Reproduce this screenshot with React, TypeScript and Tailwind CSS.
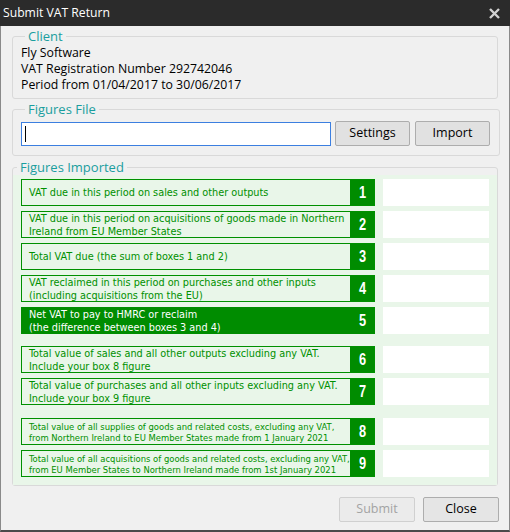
import React from 'react';

type Row = {
  num: string;
  lines: string[];
  small?: boolean;
  highlight?: boolean;
  gapBefore?: string;
};

const rows: Row[] = [
  { num: '1', lines: ['VAT due in this period on sales and other outputs'] },
  { num: '2', lines: ['VAT due in this period on acquisitions of goods made in Northern', 'Ireland from EU Member States'] },
  { num: '3', lines: ['Total VAT due (the sum of boxes 1 and 2)'] },
  { num: '4', lines: ['VAT reclaimed in this period on purchases and other inputs', '(including acquisitions from the EU)'] },
  { num: '5', lines: ['Net VAT to pay to HMRC or reclaim', '(the difference between boxes 3 and 4)'], highlight: true },
  { num: '6', lines: ['Total value of sales and all other outputs excluding any VAT.', 'Include your box 8 figure'], gapBefore: 'mt-[12px]' },
  { num: '7', lines: ['Total value of purchases and all other inputs excluding any VAT.', 'Include your box 9 figure'] },
  { num: '8', lines: ['Total value of all supplies of goods and related costs, excluding any VAT,', 'from Northern Ireland to EU Member States made from 1 January 2021'], small: true, gapBefore: 'mt-[13px]' },
  { num: '9', lines: ['Total value of all acquisitions of goods and related costs, excluding any VAT,', 'from EU Member States to Northern Ireland made from 1st January 2021'], small: true },
];

const FigureRow: React.FC<{ row: Row; first: boolean }> = ({ row, first }) => {
  const labelBox = row.highlight ? 'bg-[#008c00] text-white' : 'bg-[#e9f6e9] text-[#009000]';
  return (
    <div className={`flex h-[27px] ${first ? '' : row.gapBefore ?? 'mt-[5px]'}`}>
      <div className={`flex w-[354px] border ${row.highlight ? 'border-[#008c00]' : 'border-[#009000]'}`}>
        <div
          className={`flex-1 min-w-0 overflow-hidden flex flex-col justify-center pl-[7px] ${labelBox} ${
            row.small ? 'text-[9.4px] leading-[11px]' : 'text-[10.8px] leading-[13px]'
          }`}
        >
          {row.lines.map((l) => (
            <div key={l} className="whitespace-nowrap">{l}</div>
          ))}
        </div>
        <div className="flex-none w-[24px] bg-[#008c00] text-white flex items-center justify-center text-[16px] font-bold font-['Liberation_Sans',sans-serif]">
          <span className="inline-block scale-x-80">{row.num}</span>
        </div>
      </div>
      <div className="ml-[8px] w-[106px] bg-white" />
    </div>
  );
};

export default function App() {
  return (
    <div className="w-[510px] h-[532px] bg-[#f0f0f0] flex flex-col border-l border-r border-[#8a8a8a] border-b-2 border-b-[#4a4a4a] font-['Open_Sans','Noto_Sans',sans-serif] text-black">
      {/* title bar */}
      <div className="h-[26px] bg-[#2b2b2b] flex items-center justify-between pl-[3px] pr-[10px] -mx-px">
        <span className="text-white text-[12.2px]">Submit VAT Return</span>
        <svg width="11" height="11" viewBox="0 0 11 11">
          <path d="M1 1 L10 10 M10 1 L1 10" stroke="#d2d2d2" strokeWidth="2.4" />
        </svg>
      </div>

      <div className="flex flex-col px-[11px]">
        {/* Client */}
        <fieldset className="mt-[2px] border border-[#d9d9d9] rounded-[3px] pl-[8px] pt-[1px] pb-[5px]">
          <legend className="ml-[4px] px-[3px] text-[13px] leading-[16px] text-[#1a9e9e]">Client</legend>
          <div className="text-[12.3px] leading-[16px]">
            <div>Fly Software</div>
            <div>VAT Registration Number 292742046</div>
            <div>Period from 01/04/2017 to 30/06/2017</div>
          </div>
        </fieldset>

        {/* Figures File */}
        <fieldset className="mt-[2px] border border-[#d9d9d9] rounded-[3px] pl-[8px] pr-[9px] pt-[4px] pb-[9px]">
          <legend className="ml-[4px] px-[3px] text-[13px] leading-[16px] text-[#1a9e9e]">Figures File</legend>
          <div className="flex items-center">
            <div className="w-[310px] h-[24px] bg-white border border-[#3c7fe0] flex items-center pl-[3px]">
              <div className="w-px h-[16px] bg-black" />
            </div>
            <button className="ml-[4px] w-[75px] h-[25px] bg-[#e1e1e1] border border-[#adadad] rounded-[2px] text-[12.5px]">
              Settings
            </button>
            <button className="ml-[5px] w-[75px] h-[25px] bg-[#e1e1e1] border border-[#adadad] rounded-[2px] text-[12.5px]">
              Import
            </button>
          </div>
        </fieldset>

        {/* Figures Imported */}
        <fieldset className="mt-[3px] border border-[#d9d9d9] rounded-[3px] p-0">
          <legend className="ml-[4px] px-[3px] text-[13px] leading-[16px] text-[#1a9e9e]">Figures Imported</legend>
          <div className="bg-[#e9f6e9] pl-[8px] pr-[8px] pt-[4px] pb-[8px] font-['DejaVu_Sans_Condensed','DejaVu_Sans',sans-serif]">
            {rows.map((r, i) => (
              <FigureRow key={r.num} row={r} first={i === 0} />
            ))}
          </div>
        </fieldset>

        {/* footer */}
        <div className="flex justify-end gap-[8px] mt-[11px] -mr-px">
          <button disabled className="w-[76px] h-[25px] bg-[#ebebeb] border border-[#d0d0d0] rounded-[2px] text-[#a3a3a3] text-[12.5px]">
            Submit
          </button>
          <button className="w-[76px] h-[25px] bg-[#e5e5e5] border border-[#adadad] rounded-[2px] text-[12.5px]">
            Close
          </button>
        </div>
      </div>
    </div>
  );
}
